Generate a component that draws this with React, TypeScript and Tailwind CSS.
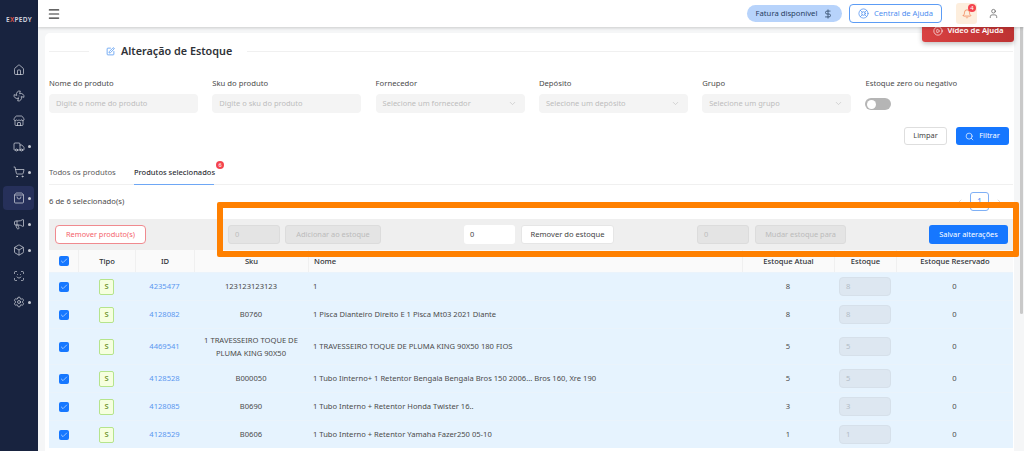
import React from "react";
import { Home, Fan, Store, Truck, ShoppingCart, ShoppingBag, Megaphone, Box, ScanFace, Settings, Menu, DollarSign, LifeBuoy, Bell, User, CirclePlay, SquarePen, ChevronDown, Search, Check, ChevronLeft, ChevronRight } from "lucide-react";

const nav: { I: any; dot: boolean; h: string; active?: boolean }[] = [
  { I: Home, dot: false, h: "h-[26px]" },
  { I: Fan, dot: false, h: "h-[25px]" },
  { I: Store, dot: false, h: "h-[26px]" },
  { I: Truck, dot: true, h: "h-[25px]" },
  { I: ShoppingCart, dot: true, h: "h-[26px]" },
  { I: ShoppingBag, dot: true, h: "h-[26px]", active: true },
  { I: Megaphone, dot: true, h: "h-[26px]" },
  { I: Box, dot: true, h: "h-[26px]" },
  { I: ScanFace, dot: false, h: "h-[26px]" },
  { I: Settings, dot: true, h: "h-[26px]" },
];

const cols = "grid grid-cols-[29px_57px_59px_114px_434px_92px_62px_117px] items-center";

const rows = [
  { id: "4235477", sku: "123123123123", nome: "1", atual: "8", h: "h-[28px]" },
  { id: "4128082", sku: "B0760", nome: "1 Pisca Dianteiro Direito E 1 Pisca Mt03 2021 Diante", atual: "8", h: "h-[28px]" },
  { id: "4469541", sku: "1 TRAVESSEIRO TOQUE DE PLUMA KING 90X50", nome: "1 TRAVESSEIRO TOQUE DE PLUMA KING 90X50 180 FIOS", atual: "5", h: "h-[36px]" },
  { id: "4128528", sku: "B000050", nome: "1 Tubo Iinterno+ 1 Retentor Bengala Bengala Bros 150 2006... Bros 160, Xre 190", atual: "5", h: "h-[28px]" },
  { id: "4128085", sku: "B0690", nome: "1 Tubo Interno + Retentor Honda Twister 16..", atual: "3", h: "h-[28px]" },
  { id: "4128529", sku: "B0606", nome: "1 Tubo Interno + Retentor Yamaha Fazer250 05-10", atual: "1", h: "h-[28px]" },
];

function Chk() {
  return (
    <span className="w-[10px] h-[10px] rounded-[2px] bg-[#1677ff] flex items-center justify-center mx-auto">
      <Check size={8} strokeWidth={2} className="text-[#dbeafe]" />
    </span>
  );
}

function Field({ label, ph, select }: { label: string; ph: string; select?: boolean }) {
  return (
    <div className="w-[149px] shrink-0">
      <div className="text-[7.7px] leading-[12px] text-[#4b4b4b] mb-[5px] whitespace-nowrap">{label}</div>
      <div className="h-[19px] rounded-[4px] bg-[#f4f4f4] flex items-center justify-between px-[7px] text-[7.5px] text-[#bdbdbd] whitespace-nowrap">
        <span>{ph}</span>
        {select && <ChevronDown size={9} className="text-[#c8c8c8] mr-[1px]" />}
      </div>
    </div>
  );
}

export default function App() {
  return (
    <div className="relative flex w-[1024px] h-[451px] overflow-hidden bg-[#f5f6f7] text-[#3f3f3f] font-['Noto_Sans','Inter',sans-serif]">
      <aside className="w-[38px] shrink-0 bg-[#18233f] flex flex-col items-stretch">
        <div className="h-[57px] pt-[14px] text-center text-[6.5px] leading-[12px] font-semibold tracking-[0.3px] text-[#d5d8e0]">
          E<span className="text-[#e0523f]">X</span>PEDY
        </div>
        {nav.map(({ I, dot, h, active }, i) => (
          <div key={i} className={`${h} relative flex items-center justify-center`}>
            {active && <div className="absolute left-[3px] right-[4px] top-[1px] bottom-[1px] rounded-[4px] bg-[#26305a]" />}
            <I size={12} strokeWidth={1.4} className="relative text-[#d8dbe2]" />
            {dot && <span className="absolute left-[28px] top-1/2 -mt-[1.5px] w-[3px] h-[3px] rounded-full bg-[#c6cad3]" />}
          </div>
        ))}
      </aside>

      <div className="flex-1 min-w-0 flex flex-col">
        <header className="relative z-20 h-[27px] bg-white shadow-[0_1px_3px_rgba(0,0,0,0.18)] flex items-center pl-[9px] pr-[25px] shrink-0">
          <Menu size={14} strokeWidth={2} className="text-[#333]" />
          <div className="ml-auto flex items-center">
            <div className="h-[17px] w-[95px] rounded-full bg-[#b7d3fb] flex items-center justify-center gap-[6px] text-[7.7px] text-[#27405f] whitespace-nowrap">
              Fatura disponível <DollarSign size={10} strokeWidth={1.8} />
            </div>
            <div className="ml-[7px] h-[19px] w-[93px] rounded-[4px] border border-[#5c9cf5] bg-white flex items-center justify-center gap-[5px] text-[7.6px] text-[#4d8ef0] whitespace-nowrap">
              <LifeBuoy size={11} strokeWidth={1.6} /> Central de Ajuda
            </div>
            <div className="relative ml-[14px] w-[21px] h-[21px] rounded-[3px] bg-[#fdeedd] flex items-center justify-center">
              <Bell size={10} strokeWidth={1.6} className="text-[#f0703a]" />
              <span className="absolute right-[1px] top-[1px] w-[8px] h-[8px] rounded-full bg-[#f4444e] text-white text-[6px] leading-[8px] text-center">4</span>
            </div>
            <User size={11} strokeWidth={1.5} className="ml-[11px] text-[#555]" />
          </div>
        </header>

        <div className="relative flex-1 min-h-0 pl-[7px] pr-[10px] pt-[6px]">
          <div className="absolute z-10 left-[884px] -top-[8px] w-[92px] h-[23px] rounded-[3px] bg-gradient-to-r from-[#d94141] to-[#bd3232] shadow-[0_2px_5px_rgba(0,0,0,0.25)] text-white text-[7.7px] font-semibold flex items-center justify-center gap-[5px] whitespace-nowrap">
            <CirclePlay size={10} strokeWidth={1.6} /> Vídeo de Ajuda
          </div>
          <main className="bg-white rounded-t-[5px] h-full pl-[4px] pr-[1px] pt-[8px]">
            <div className="flex items-center h-[20px]">
              <div className="w-[40px] h-px bg-[#f0f0f0]" />
              <SquarePen size={9} strokeWidth={2} className="ml-[17px] text-[#4b93f0]" />
              <h1 className="ml-[6px] w-[126px] text-[10.8px] font-semibold text-[#2f3237] whitespace-nowrap">Alteração de Estoque</h1>
              <div className="flex-1 h-px bg-[#f0f0f0]" />
            </div>

            <div className="flex gap-[14.3px] mt-[16px]">
              <Field label="Nome do produto" ph="Digite o nome do produto" />
              <Field label="Sku do produto" ph="Digite o sku do produto" />
              <Field label="Fornecedor" ph="Selecione um fornecedor" select />
              <Field label="Depósito" ph="Selecione um depósito" select />
              <Field label="Grupo" ph="Selecione um grupo" select />
              <div className="w-[149px] shrink-0">
                <div className="text-[7.7px] leading-[12px] text-[#4b4b4b] mb-[9px] whitespace-nowrap">Estoque zero ou negativo</div>
                <div className="w-[26px] h-[12px] rounded-full bg-[#b5b5b5] p-[1.5px]">
                  <div className="w-[9px] h-[9px] rounded-full bg-white" />
                </div>
              </div>
            </div>

            <div className="flex justify-end gap-[9px] mt-[14px] pr-[4px]">
              <div className="w-[43px] h-[18px] rounded-[3px] border border-[#dedede] bg-white text-[7.4px] text-[#444] flex items-center justify-center">Limpar</div>
              <div className="w-[53px] h-[18px] rounded-[3px] bg-[#1677ff] text-white text-[7.4px] flex items-center justify-center gap-[5px]">
                <Search size={9} strokeWidth={1.8} /> Filtrar
              </div>
            </div>

            <div className="flex border-b border-[#f0f0f0] mt-[17px] h-[23px] text-[7.7px] whitespace-nowrap">
              <div className="pt-[5px] w-[67px] text-[#5b5b5b]">Todos os produtos</div>
              <div className="relative ml-[18px] w-[80px] pt-[5px] text-[7.5px] font-medium text-[#2f3237] border-b border-[#6ea7f5] h-[23px]">
                Produtos selecionados
                <span className="absolute -right-[10px] -top-[1px] w-[8px] h-[8px] rounded-full bg-[#f4444e] text-white text-[5.5px] leading-[8px] text-center">6</span>
              </div>
            </div>

            <div className="flex items-center h-[34px] text-[7.7px] text-[#4b4b4b] pb-[1px]">
              <span>6 de 6 selecionado(s)</span>
              <div className="ml-auto flex items-center gap-[6px] pr-[10px] text-[#c8c8c8]">
                <ChevronLeft size={8} />
                <div className="w-[19px] h-[19px] rounded-[3px] border border-[#7fb0f5] text-[8px] text-[#4d8ef0] flex items-center justify-center">1</div>
                <ChevronRight size={8} />
              </div>
            </div>

            <div className="w-[964px]">
              <div className="h-[31px] bg-[#efefef] flex items-center pl-[6px] pr-[5px] text-[7.4px] whitespace-nowrap">
                <div className="w-[91px] h-[19px] rounded-[4px] border border-[#f08a8f] bg-white text-[#f4646c] flex items-center justify-center">Remover produto(s)</div>
                <div className="ml-[82px] w-[52px] h-[19px] rounded-[3px] bg-[#e4e4e4] border border-[#dcdcdc] text-[#bdbdbd] flex items-center px-[6px]">0</div>
                <div className="ml-[5px] w-[96px] h-[19px] rounded-[3px] bg-[#e4e4e4] border border-[#dcdcdc] text-[#bbb] flex items-center justify-center">Adicionar ao estoque</div>
                <div className="ml-[83px] w-[51px] h-[19px] rounded-[3px] bg-white text-[#444] flex items-center px-[6px]">0</div>
                <div className="ml-[6px] w-[93px] h-[19px] rounded-[3px] bg-white border border-[#e6e6e6] text-[7.6px] text-[#444] flex items-center justify-center">Remover do estoque</div>
                <div className="ml-[83px] w-[52px] h-[19px] rounded-[3px] bg-[#e4e4e4] border border-[#dcdcdc] text-[#bdbdbd] flex items-center px-[6px]">0</div>
                <div className="ml-[6px] w-[91px] h-[19px] rounded-[3px] bg-[#e4e4e4] border border-[#dcdcdc] text-[#bbb] flex items-center justify-center">Mudar estoque para</div>
                <div className="ml-auto w-[79px] h-[19px] rounded-[3px] bg-[#1677ff] text-white flex items-center justify-center">Salvar alterações</div>
              </div>

              <div className={`${cols} h-[22px] bg-[#fafafa] text-[7.6px] font-medium text-[#2f3237]`}>
                <Chk />
                <div className="text-center border-l border-[#f0f0f0] leading-[22px]">Tipo</div>
                <div className="text-center border-l border-[#f0f0f0] leading-[22px]">ID</div>
                <div className="text-center border-l border-[#f0f0f0] leading-[22px]">Sku</div>
                <div className="pl-[5px] border-l border-[#f0f0f0] leading-[22px]">Nome</div>
                <div className="text-center border-l border-[#f0f0f0] leading-[22px]">Estoque Atual</div>
                <div className="text-center border-l border-[#f0f0f0] leading-[22px]">Estoque</div>
                <div className="text-center border-l border-[#f0f0f0] leading-[22px]">Estoque Reservado</div>
              </div>

              {rows.map((r) => (
                <div key={r.id} className={`${cols} ${r.h} bg-[#e6f3fe] border-t border-[#eaf3fb] text-[7.6px] text-[#4b4b4b]`}>
                  <Chk />
                  <div className="flex justify-center">
                    <span className="w-[15px] h-[16px] rounded-[2px] border border-[#b5e48c] bg-[#f6ffdf] text-[#6a8f1f] text-[7.5px] font-semibold flex items-center justify-center">S</span>
                  </div>
                  <div className="text-center text-[#5b97f0]">{r.id}</div>
                  <div className="text-center leading-[12.5px] px-[8px]">{r.sku}</div>
                  <div className="pl-[5px] truncate">{r.nome}</div>
                  <div className="text-center">{r.atual}</div>
                  <div className="flex justify-center">
                    <span className="w-[52px] h-[19px] rounded-[4px] border border-[#d6e0ea] bg-[#dde7f1] text-[#b3bcc6] flex items-center px-[6px]">{r.atual}</span>
                  </div>
                  <div className="text-center">0</div>
                </div>
              ))}
            </div>
          </main>
        </div>
      </div>

      <div className="absolute right-[1px] top-[14px] w-[3px] h-[300px] rounded-full bg-[#c9c9c9]" />
      <div className="absolute z-30 left-[217px] top-[202px] w-[802px] h-[55px] rounded-[2px] border-[6px] border-[#ff8000] pointer-events-none" />
    </div>
  );
}
